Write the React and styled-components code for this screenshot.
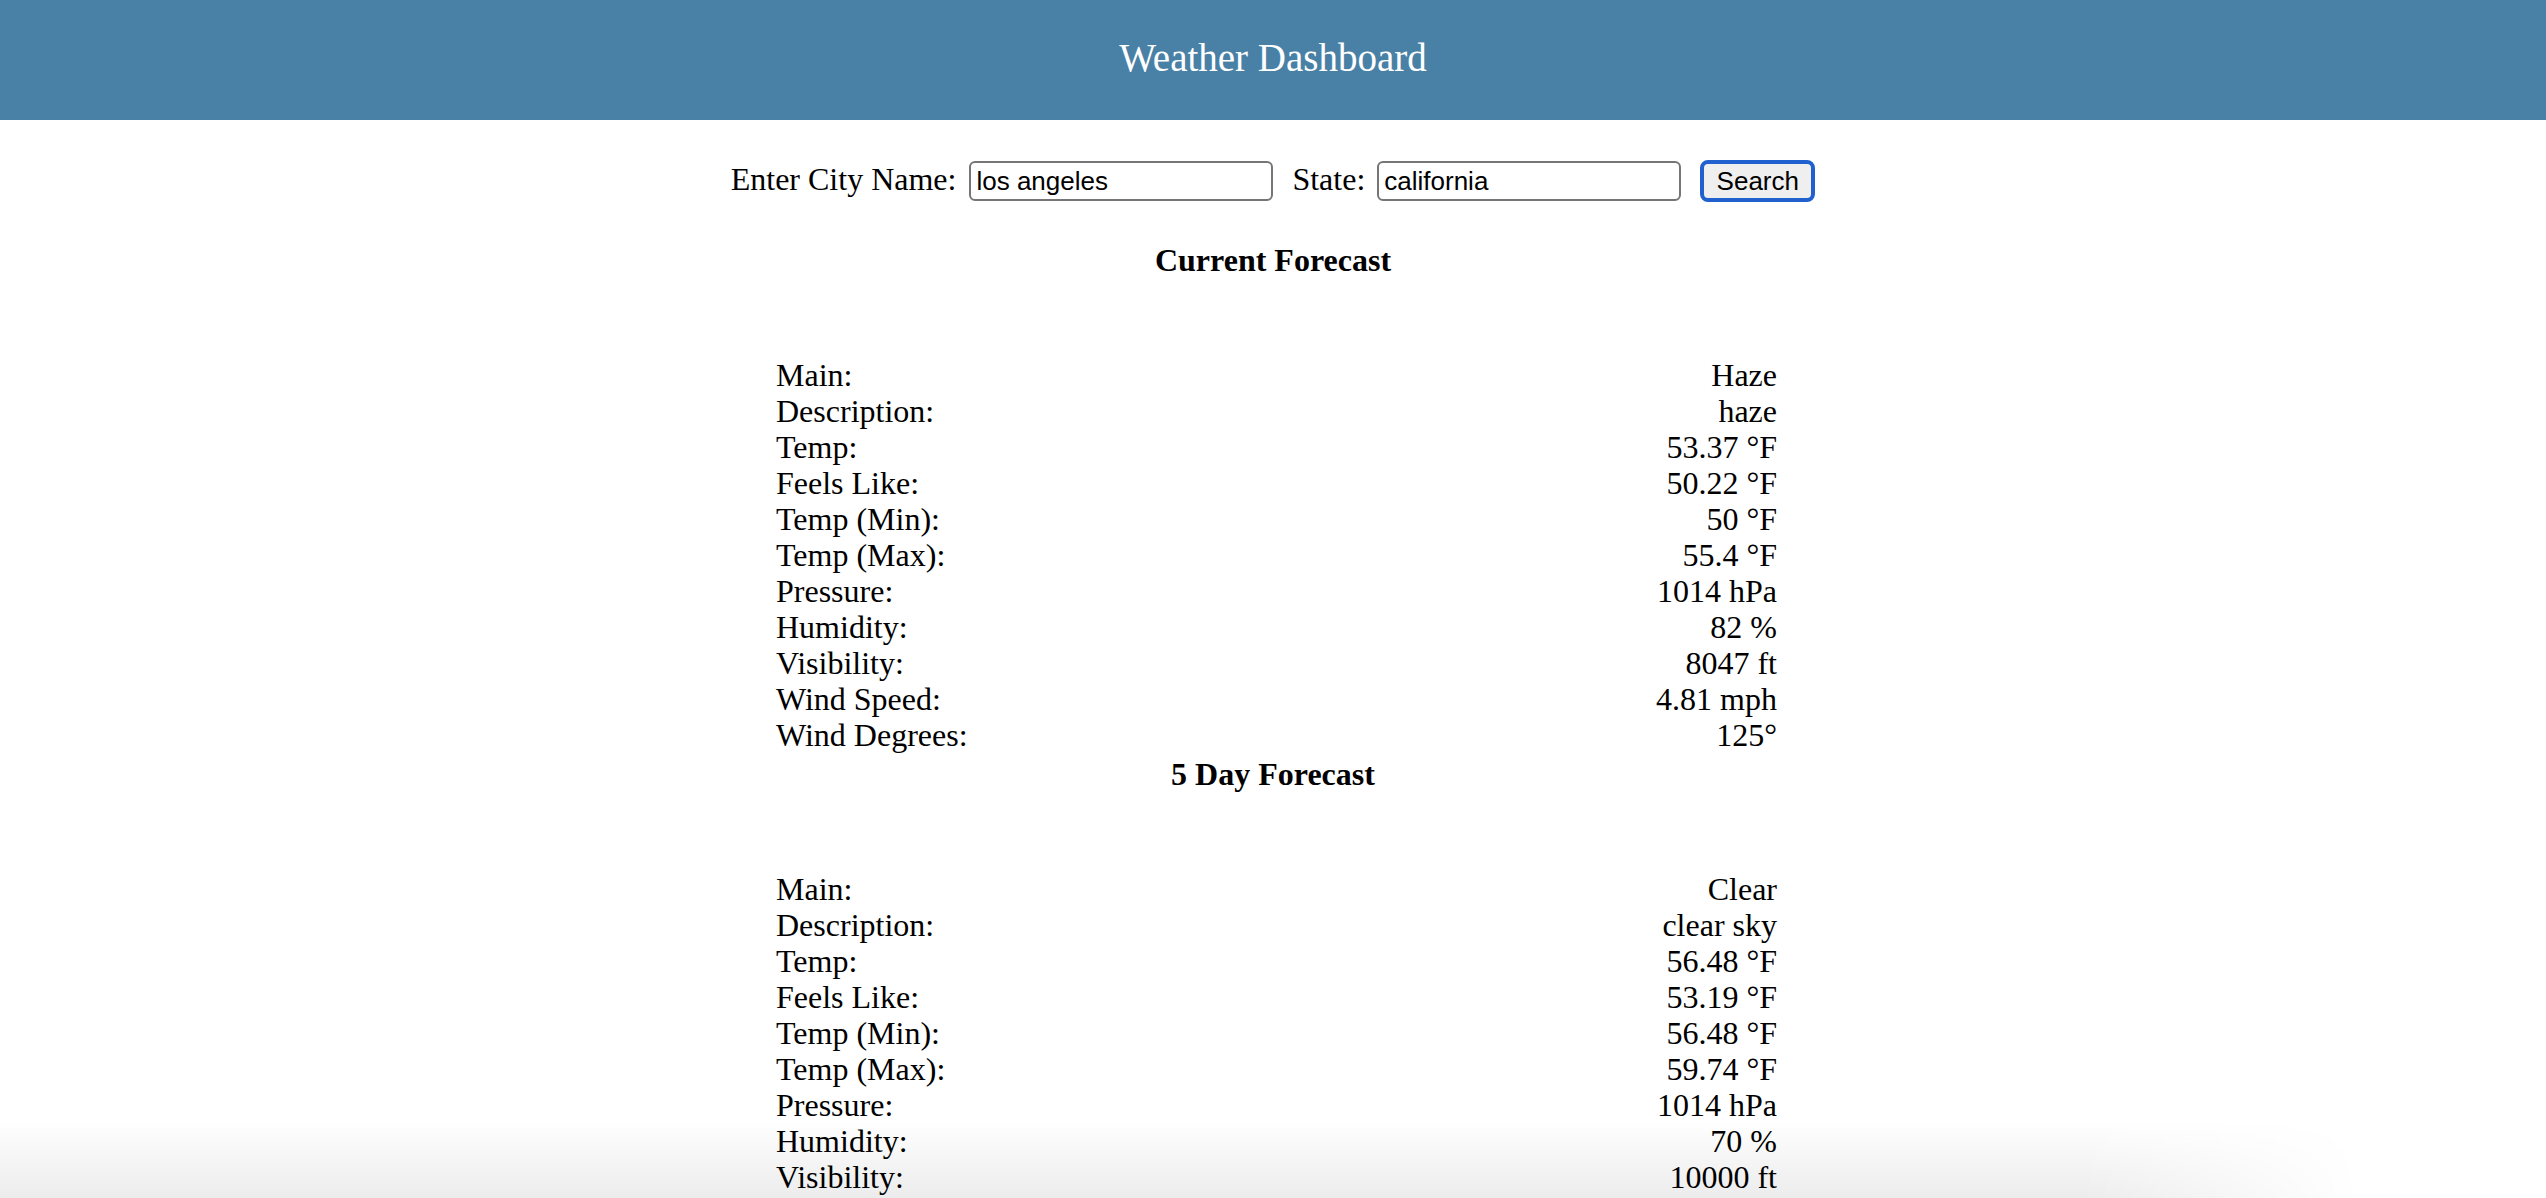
import React from "react";
import styled, { createGlobalStyle } from "styled-components";

const current = [
  ["Main:", "Haze"],
  ["Description:", "haze"],
  ["Temp:", "53.37 °F"],
  ["Feels Like:", "50.22 °F"],
  ["Temp (Min):", "50 °F"],
  ["Temp (Max):", "55.4 °F"],
  ["Pressure:", "1014 hPa"],
  ["Humidity:", "82 %"],
  ["Visibility:", "8047 ft"],
  ["Wind Speed:", "4.81 mph"],
  ["Wind Degrees:", "125°"],
];

const fiveDay = [
  ["Main:", "Clear"],
  ["Description:", "clear sky"],
  ["Temp:", "56.48 °F"],
  ["Feels Like:", "53.19 °F"],
  ["Temp (Min):", "56.48 °F"],
  ["Temp (Max):", "59.74 °F"],
  ["Pressure:", "1014 hPa"],
  ["Humidity:", "70 %"],
  ["Visibility:", "10000 ft"],
  ["Wind Speed:", "3.44 mph"],
  ["Wind Degrees:", "271°"],
];

function Forecast({ title, rows, first }) {
  return (
    <Section $first={first}>
      <Heading>{title}</Heading>
      <Table>
        {rows.map(([label, value]) => (
          <Row key={label}>
            <span>{label}</span>
            <span>{value}</span>
          </Row>
        ))}
      </Table>
    </Section>
  );
}

export default function App() {
  return (
    <>
      <GlobalStyle />
      <Header>
        <Title>Weather Dashboard</Title>
      </Header>
      <SearchForm onSubmit={(e) => e.preventDefault()}>
        <Label $gap={13}>Enter City Name:</Label>
        <TextInput defaultValue="los angeles" />
        <Label $gap={12}>State:</Label>
        <TextInput defaultValue="california" />
        <SearchButton type="submit">Search</SearchButton>
      </SearchForm>
      <Forecast title="Current Forecast" rows={current} first />
      <Forecast title="5 Day Forecast" rows={fiveDay} />
      <BottomShade />
    </>
  );
}

const GlobalStyle = createGlobalStyle`
body {
  margin: 0;
  background: #ffffff;
  color: #000000;
  font-family: "Liberation Serif", "Times New Roman", serif;
  font-size: 32px;
}
`;

const Header = styled.header`
  height: 120px;
  box-sizing: border-box;
  padding-top: 38px;
  background: #4981a6;
  text-align: center;
`;

const Title = styled.h1`
  margin: 0;
  font-size: 39px;
  font-weight: normal;
  line-height: 39px;
  color: #ffffff;
`;

const SearchForm = styled.form`
  display: flex;
  justify-content: center;
  align-items: center;
  height: 42px;
  margin-top: 40px;
`;

const Label = styled.label`
  line-height: 36px;
  margin-right: ${(p) => p.$gap}px;
  position: relative;
  top: -2px;
`;

const TextInput = styled.input`
  width: 304px;
  height: 40px;
  box-sizing: border-box;
  margin: 0 19px 0 0;
  padding: 0 5px;
  border: 2px solid #767676;
  border-radius: 6px;
  font-family: "Liberation Sans", Arial, sans-serif;
  font-size: 26px;
  color: #000000;
  background: #ffffff;
  outline: none;
`;

const SearchButton = styled.button`
  width: 115px;
  height: 42px;
  box-sizing: border-box;
  padding: 0;
  border: 4px solid #2160cf;
  border-radius: 8px;
  background: #efefef;
  font-family: "Liberation Sans", Arial, sans-serif;
  font-size: 26px;
  color: #000000;
`;

const Section = styled.section`
  margin-top: ${(p) => (p.$first ? "40px" : "3px")};
`;

const Heading = styled.h3`
  margin: 0;
  font-size: 32px;
  font-weight: bold;
  line-height: 36px;
  text-align: center;
`;

const Table = styled.div`
  width: 1001px;
  margin: 79px 0 0 calc(50% - 497px);
`;

const Row = styled.div`
  display: flex;
  justify-content: space-between;
  line-height: 36px;
`;

const BottomShade = styled.div`
  position: fixed;
  left: 0;
  bottom: 0;
  width: 2360px;
  height: 78px;
  pointer-events: none;
  background: linear-gradient(to bottom, rgba(0, 0, 0, 0), rgba(0, 0, 0, 0.075));
  -webkit-mask-image: linear-gradient(to right, #000 2080px, transparent 2360px);
  mask-image: linear-gradient(to right, #000 2080px, transparent 2360px);
`;
